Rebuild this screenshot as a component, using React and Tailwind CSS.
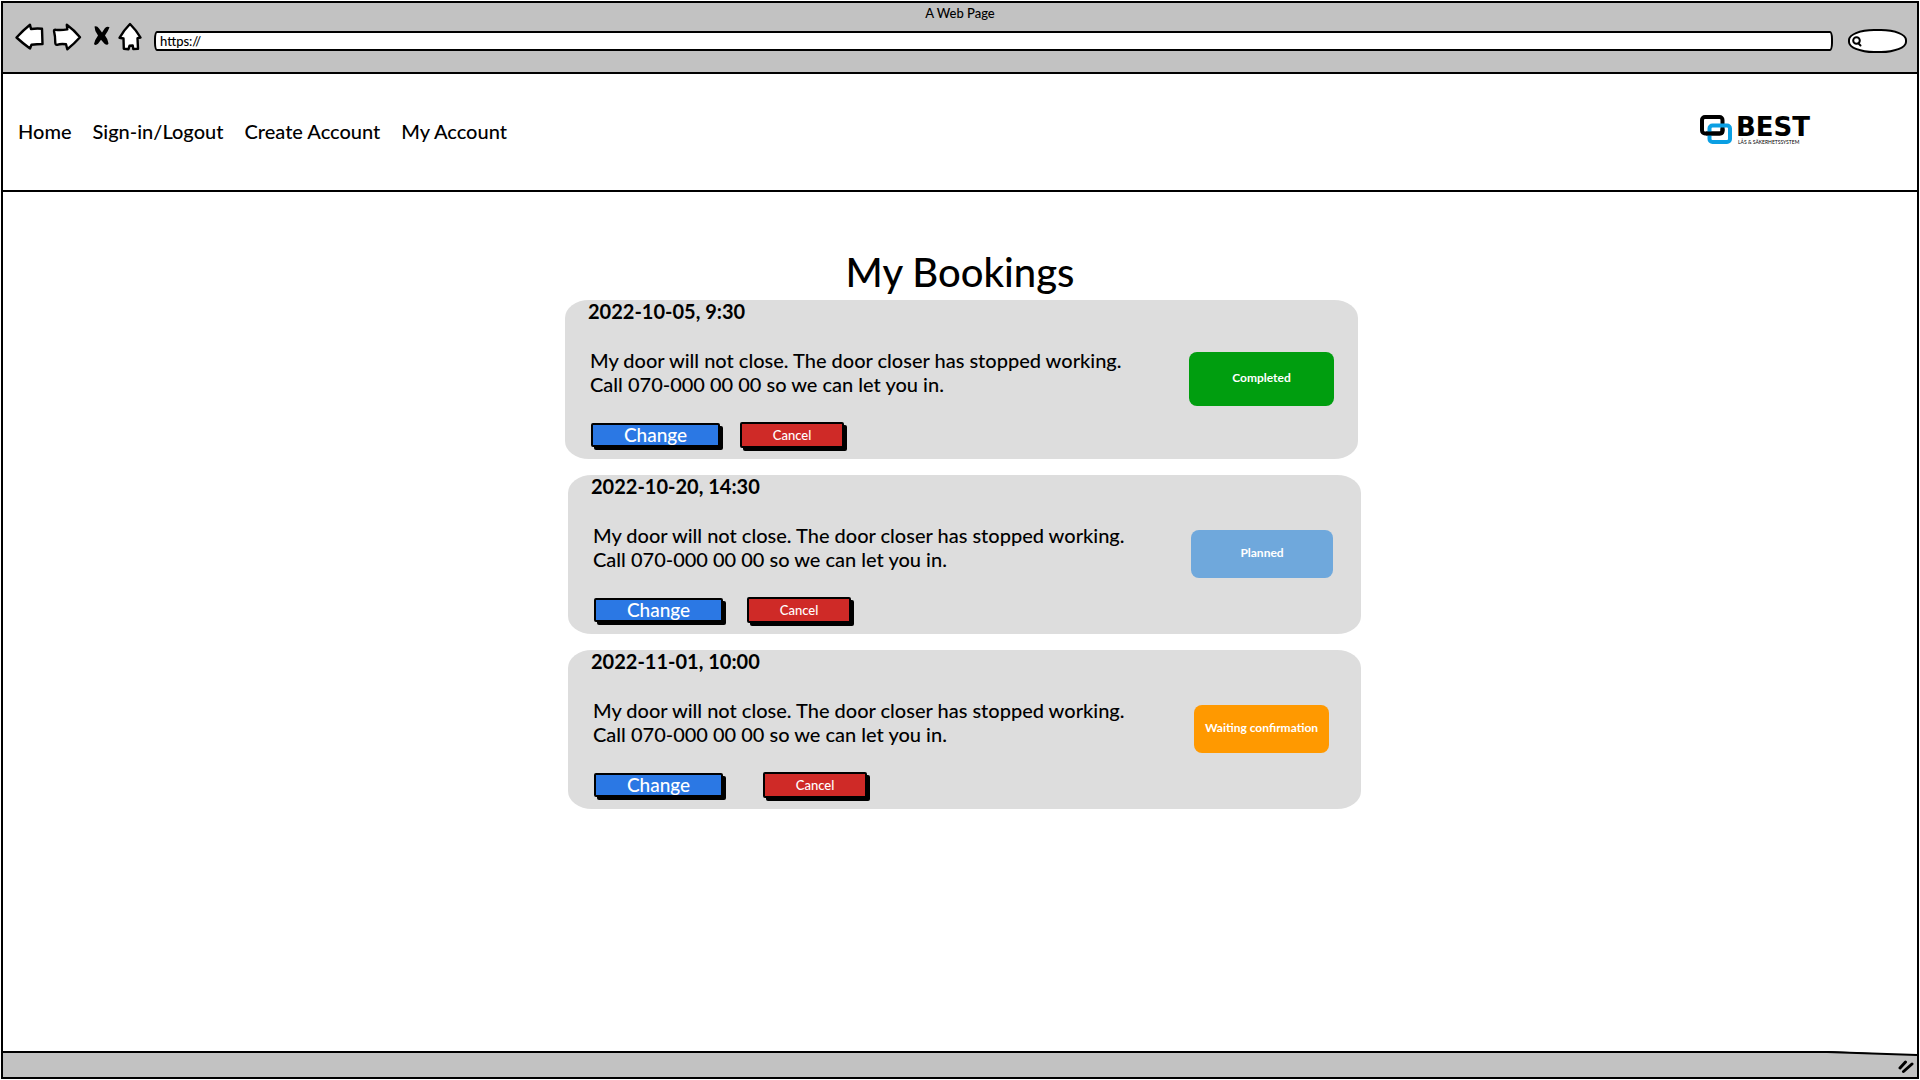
const LINE = { fill: "#fff", stroke: "#000", strokeWidth: 2.4, strokeLinejoin: "round" };

function BackIcon() {
  return (
    <svg viewBox="15 23 30 30" className="h-[30px] w-[30px] overflow-visible" aria-hidden="true">
      <path {...LINE} d="M16.5 37.5Q23.500 30 30 24.8L31 29Q37 28.2 42 28.8L42.500 44Q37 44 31.500 44.8L30 48.5Q23 43.500 16.500 37.500Z" />
    </svg>
  );
}

function ForwardIcon() {
  return (
    <svg viewBox="53 23 30 30" className="h-[30px] w-[30px] overflow-visible" aria-hidden="true">
      <path {...LINE} d="M54 31Q54 29.500 55.500 29.800Q61 30.500 67.300 29.400L66.800 24.800Q74 30 80 37.300Q74 44 67.300 49.300L66 44.300Q61 43.500 57 44.800Q55.500 45 55.300 43Q55.300 36 54 31Z" />
    </svg>
  );
}

function StopIcon() {
  return (
    <svg viewBox="91 23 20 30" className="h-[30px] w-5 overflow-visible" aria-hidden="true">
      <path d="M94.500 26.500Q97 25.500 99 28.500L102 32.500L105 28Q107.500 26 109.500 27.300Q108 31.500 105 35.500Q108 39 108.500 43.500Q107.500 46 104.500 43.800L101 39.800L98 43.800Q95.500 46 94 44Q95 39.500 98 35.500Q94.500 31 94.500 26.500Z" />
    </svg>
  );
}

function HomeIcon() {
  return (
    <svg viewBox="119 23 26 30" className="h-[30px] w-[26px] overflow-visible" aria-hidden="true">
      <path {...LINE} d="M130 24Q136.500 30.500 140.500 37.500L137.500 38.200L138 48.800L133.300 49L132.700 45.500L129.500 45.800L128.500 49.200L123.800 48.800L123.500 38.500L119.500 37.800Q124 30 130 24Z" />
    </svg>
  );
}

function Logo() {
  return (
    <a href="#" aria-label="Best" className="mr-[107px] mb-1 flex items-start gap-1 text-black">
      <svg viewBox="0 0 32 30" className="h-[30px] w-8" fill="none" strokeWidth="4" aria-hidden="true">
        <rect x="2" y="2" width="20.500" height="16.500" rx="3" stroke="#000" />
        <rect x="9.500" y="10.500" width="20.500" height="16.500" rx="3" stroke="#0a9fe3" />
        <path d="M6 18.500H20Q22.500 18.500 22.500 15.500V13.500" stroke="#000" />
      </svg>
      <span className="flex flex-col">
        <span className="font-['DejaVu_Sans',sans-serif] text-[26px] leading-6 font-bold">BEST</span>
        <span className="pl-0.5 text-[5px] leading-[6px]">LÅS &amp; SÄKERHETSSYSTEM</span>
      </span>
    </a>
  );
}

const NAV = ["Home", "Sign-in/Logout", "Create Account", "My Account"];

const BOOKINGS = [
  { date: "2022-10-05, 9:30", status: "Completed", card: "mr-[3px]", badge: "w-[145px] h-[54px] mr-6 bg-[#009e0f]", gap: "gap-5" },
  { date: "2022-10-20, 14:30", status: "Planned", card: "ml-[3px]", badge: "w-[142px] h-12 mr-7 bg-[#6fa8dc]", gap: "gap-6" },
  { date: "2022-11-01, 10:00", status: "Waiting confirmation", card: "ml-[3px]", badge: "w-[135px] h-12 mr-8 bg-[#ff9900]", gap: "gap-10" },
];

function Booking({ booking }) {
  return (
    <li className={"flex items-center justify-between rounded-[24px/18px] bg-[#dddddd] pb-[9px] " + booking.card}>
      <article className="pl-[23px]">
        <h2 className="text-[20px] leading-[22px] font-bold">{booking.date}</h2>
        <p className="mt-[26px] pl-0.5 text-[20px] leading-6 font-medium">
          My door will not close. The door closer has stopped working.
          <br />
          Call 070-000 00 00 so we can let you in.
        </p>
        <div className={"mt-[26px] flex h-7 items-center pl-[3px] " + booking.gap}>
          <button type="button" className="mb-0.5 flex h-6 w-[129px] items-center justify-center rounded-xs border-2 border-black bg-[#2b78e4] text-[19px] leading-5 font-medium text-white shadow-[3px_3px_0_#000]">
            Change
          </button>
          <button type="button" className="mb-0.5 flex h-[26px] w-[104px] items-center justify-center rounded-xs border-2 border-black bg-[#cf2a27] text-[13px] leading-5 font-medium text-white shadow-[3px_3px_0_#000]">
            Cancel
          </button>
        </div>
      </article>
      <span className={"mt-[7px] flex items-center justify-center rounded-lg pb-0.5 text-[12px] leading-4 font-bold text-white " + booking.badge}>
        {booking.status}
      </span>
    </li>
  );
}

export default function App() {
  return (
    <div className="flex min-h-screen flex-col bg-white p-px font-['Lato',sans-serif] text-black">
      <header className="border-2 border-black bg-[#c2c2c2] pb-[19px]">
        <div className="text-center text-[13px] leading-5 font-medium">A Web Page</div>
        <div className="flex h-[30px] items-end gap-2 pr-2.5 pl-3">
          <button type="button" aria-label="Back"><BackIcon /></button>
          <button type="button" aria-label="Forward"><ForwardIcon /></button>
          <button type="button" aria-label="Stop"><StopIcon /></button>
          <button type="button" aria-label="Home"><HomeIcon /></button>
          <input
            type="text"
            aria-label="Address"
            defaultValue="https://"
            className="mr-[7px] mb-0.5 ml-px h-5 min-w-0 flex-1 rounded-[3px/8px] border-2 border-black bg-white px-1 text-[13px] leading-4 font-medium outline-none"
          />
          <label className="flex h-6 w-[59px] items-center rounded-[26px/11px] border-2 border-black bg-white pl-0.5">
            <svg viewBox="0 0 10 11" className="h-[11px] w-2.5 shrink-0" fill="none" stroke="#000" strokeWidth="2" strokeLinecap="round" aria-hidden="true">
              <ellipse cx="4.500" cy="4.500" rx="3.300" ry="3.300" />
              <path d="M6.500 7.500L8.500 9.500" />
            </svg>
            <input type="search" aria-label="Search" className="w-9 min-w-0 bg-transparent text-[12px] outline-none" />
          </label>
        </div>
      </header>

      <nav className="flex h-[118px] items-center justify-between border-x-2 border-b-2 border-black pl-[15px]">
        <ul className="mb-0.5 flex gap-[21px] text-[20px] leading-6 font-medium">
          {NAV.map((item) => (
            <li key={item}><a href="#">{item}</a></li>
          ))}
        </ul>
        <Logo />
      </nav>

      <main className="flex-1 border-x-2 border-black pt-14">
        <h1 className="text-center text-[40px] leading-[48px] font-medium">My Bookings</h1>
        <ul className="mx-auto mt-1 flex w-full max-w-[802px] flex-col gap-4 pl-1.5">
          {BOOKINGS.map((booking) => (
            <Booking key={booking.date} booking={booking} />
          ))}
        </ul>
      </main>

      <footer className="relative flex h-7 items-center justify-end border-2 border-black bg-[#c2c2c2]">
        <svg viewBox="0 0 90 5" className="absolute -top-0.5 right-0 h-[5px] w-[90px]" aria-hidden="true">
          <path d="M0 0H90V4Z" fill="#fff" />
          <path d="M0 1L90 4" stroke="#000" strokeWidth="2" />
        </svg>
        <svg viewBox="0 0 18 14" className="mt-1 mr-0.5 h-3.5 w-[18px]" stroke="#000" strokeWidth="3" strokeLinecap="round" aria-hidden="true">
          <path d="M3 8L8.500 2M6.500 11.500L15 4" />
        </svg>
      </footer>
    </div>
  );
}
